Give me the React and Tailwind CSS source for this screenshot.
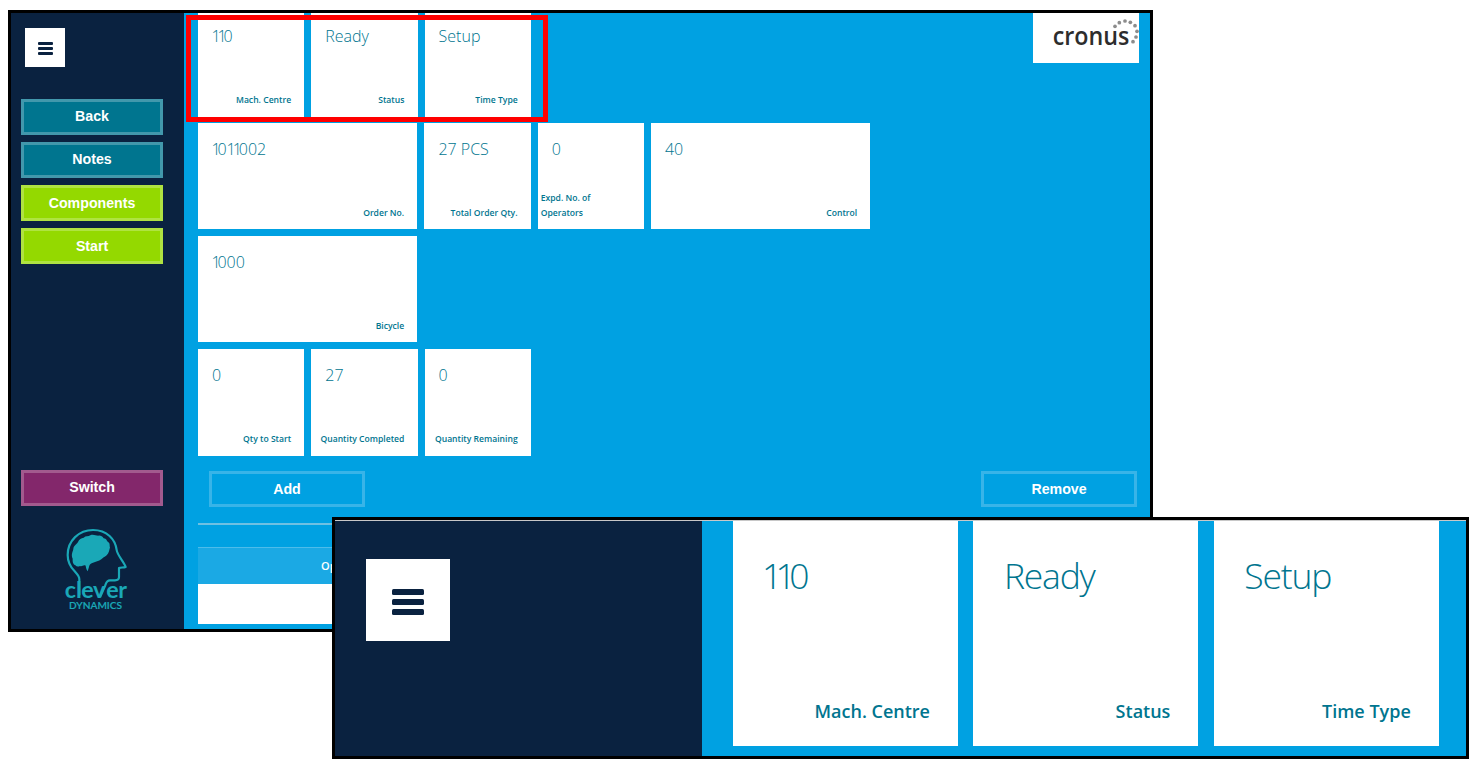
const navButtons = [
  { label: "Back", tone: "bg-[#00758f] border-[#4298ac]" },
  { label: "Notes", tone: "bg-[#00758f] border-[#4298ac]" },
  { label: "Components", tone: "bg-[#94d900] border-[#afe341]" },
  { label: "Start", tone: "bg-[#94d900] border-[#afe341]" },
];

const tileRows = [
  [
    { value: "1011002", label: "Order No.", wide: true },
    { value: "27 PCS", label: "Total Order Qty." },
    { value: "0", label: "Expd. No. of Operators", wrap: true },
    { value: "40", label: "Control", wide: true },
  ],
  [{ value: "1000", label: "Bicycle", wide: true }],
  [
    { value: "0", label: "Qty to Start" },
    { value: "27", label: "Quantity Completed" },
    { value: "0", label: "Quantity Remaining" },
  ],
];

const summary = [
  { value: "110", label: "Mach. Centre" },
  { value: "Ready", label: "Status" },
  { value: "Setup", label: "Time Type" },
];

// Sets the digit 1 on a narrower advance than the other figures.
function Figures({ value }) {
  return value.split(/(1+)/).map((part, i) =>
    part.startsWith("1") ? (
      <span key={i} className={i === 1 ? "-ml-[0.04em] tracking-[-0.19em]" : "tracking-[-0.19em]"}>
        {part}
      </span>
    ) : (
      part
    )
  );
}

function Tile({ value, label, wide, wrap, first }) {
  return (
    <div
      className={`flex shrink-0 flex-col justify-between bg-white pb-[9px] text-[#00758f] ${
        wide ? "w-[219.4px]" : "w-[106.3px]"
      } ${first ? "h-[103.5px] pt-[12px]" : "h-[106.3px] pt-[15px]"}`}
    >
      <div className="pl-[14px] text-[16px] leading-[22px] font-light">
        <Figures value={value} />
      </div>
      <div
        className={`text-[8.6px] leading-[14.6px] font-semibold ${
          wrap ? "w-[72px] pl-[3px] text-left" : "pr-[13.2px] text-right whitespace-nowrap"
        }`}
      >
        {label}
      </div>
    </div>
  );
}

function BigTile({ value, label }) {
  return (
    <div className="flex h-[225px] w-[225px] shrink-0 flex-col justify-between bg-white pt-[30px] pb-[22px] text-[#00758f]">
      <div className="pl-[30.5px] text-[35.5px] leading-[49px] font-light tracking-[-1.2px]">
        <Figures value={value} />
      </div>
      <div className="pr-[28px] text-right text-[18px] leading-[26px] font-semibold">{label}</div>
    </div>
  );
}

function Button({ label, className }) {
  return (
    <button
      className={`flex h-[36px] items-center justify-center border-[3px] pt-[0.8px] font-['Liberation_Sans',Arial,sans-serif] text-[14.2px] font-bold text-white ${className}`}
    >
      {label}
    </button>
  );
}

function CleverLogo() {
  return (
    <svg className="h-[84px] w-[70px]" viewBox="65 35 210 252" fill="none">
      <path
        d="M117 240V192C117 182 111 177 103 168C88 153 82 140 82 119C82 76 116 44 158 44C200 44 225 72 229 104C230 118 254 145 256 155C249 158 241 155 236 158V186C236 194 231 195 224 195H209C198 195 198 202 194 212L179 246"
        stroke="#1aa8b7"
        strokeWidth="6.5"
        strokeLinejoin="round"
      />
      <path
        d="M105 150C96 145 97 136 97 130C91 118 98 108 99 101C100 91 108 88 113 80C116 71 123 68 130 67C136 61 144 64 150 60C158 56 166 61 174 61C180 60 186 62 190 69C199 70 199 77 203 80C210 83 207 91 209 96C207 104 206 114 199 120C192 126 188 127 183 132C175 138 166 139 158 142C149 144 147 149 146 155L142 168C139 164 137 158 136 151C129 147 125 156 119 152C113 155 109 154 105 150Z"
        fill="#1aa8b7"
      />
      <text
        x="73 107 123 158 198 234"
        y="248"
        fontFamily="Lato, sans-serif"
        fontWeight="700"
        fontSize="70"
        fill="#1aa8b7"
      >
        clever
      </text>
      <text
        x="86"
        y="280"
        fontFamily="Lato, sans-serif"
        fontWeight="600"
        fontSize="28"
        textLength="159"
        lengthAdjust="spacingAndGlyphs"
        fill="#1aa8b7"
        stroke="#1aa8b7"
        strokeWidth="0.5"
      >
        DYNAMICS
      </text>
    </svg>
  );
}

const cronusDots = [
  [345, 79],
  [358, 68],
  [375, 63],
  [391, 67],
  [405, 77],
  [411, 94],
  [408, 111],
  [399, 125],
];

function CronusLogo() {
  return (
    <svg className="h-[50px] w-[106px] bg-white" viewBox="99 39 318 150">
      <text
        x="158"
        y="136"
        fontFamily="'Open Sans', sans-serif"
        fontWeight="600"
        fontSize="78"
        textLength="230"
        lengthAdjust="spacingAndGlyphs"
        fill="#2d2d2d"
      >
        cronus
      </text>
      {cronusDots.map(([x, y]) => (
        <circle key={x} cx={x} cy={y} r="5.6" fill="#8c8c8c" />
      ))}
    </svg>
  );
}

function MainWindow() {
  return (
    <div className="absolute top-[10px] left-[8px] flex h-[622px] w-[1145px] overflow-hidden border-[3px] border-black bg-[#00a1e2]">
      <aside className="flex w-[172.5px] shrink-0 flex-col items-start bg-[#0a2240] pl-[10.3px]">
        <button className="mt-[15px] ml-[4px] flex h-[39px] w-[39.5px] flex-col items-center justify-center gap-[2.4px] bg-white pt-[2px]">
          <span className="h-[2.6px] w-[15px] rounded-[1px] bg-[#0a2240]" />
          <span className="h-[2.6px] w-[15px] rounded-[1px] bg-[#0a2240]" />
          <span className="h-[2.6px] w-[15px] rounded-[1px] bg-[#0a2240]" />
        </button>
        <nav className="mt-[31.5px] flex flex-col gap-[7.2px]">
          {navButtons.map((b) => (
            <Button key={b.label} label={b.label} className={`w-[141.5px] ${b.tone}`} />
          ))}
        </nav>
        <Button label="Switch" className="mt-[205.5px] w-[141.5px] border-[#a25a8e] bg-[#83276b]" />
        <div className="mt-[21px] ml-[40.4px]">
          <CleverLogo />
        </div>
      </aside>
      <main className="flex min-w-0 grow flex-col pl-[14.5px]">
        <div className="flex items-start justify-between pr-[11px]">
          <div className="flex gap-[7px]">
            {summary.map((t) => (
              <Tile key={t.label} {...t} first />
            ))}
          </div>
          <CronusLogo />
        </div>
        <div className="mt-[6.6px] flex flex-col gap-[6.8px]">
          {tileRows.map((row, i) => (
            <div key={i} className="flex gap-[7px]">
              {row.map((t) => (
                <Tile key={t.label} {...t} />
              ))}
            </div>
          ))}
        </div>
        <div className="mt-[15.4px] flex justify-between pr-[13px] pl-[11px]">
          <Button label="Add" className="w-[156px] border-[#38b4e8]" />
          <Button label="Remove" className="w-[156px] border-[#38b4e8]" />
        </div>
        <div className="mt-[16px] h-[2px] w-[939px] bg-[#6ec0e2]" />
        <div className="mt-[22px] w-[939px]">
          <div className="flex h-[37px] items-center border-t border-[#4dbcea] bg-[#1ba9e4] pt-px pl-[123px] text-[11px] font-semibold text-white">
            Operation
          </div>
          <div className="h-[40.5px] bg-white" />
        </div>
      </main>
    </div>
  );
}

function DetailWindow() {
  return (
    <div className="absolute top-[517px] left-[332px] flex h-[242px] w-[1137px] flex-col border-[3px] border-black bg-[#00a1e2]">
      <div className="h-px shrink-0 bg-[#c8c8c8]" />
      <div className="flex grow">
        <div className="w-[367px] shrink-0 bg-[#0a2240] pt-[38px] pl-[31px]">
          <button className="flex h-[82px] w-[84px] flex-col items-center gap-[4.4px] bg-white pt-[30px]">
            <span className="h-[5.6px] w-[31.5px] rounded-[1.5px] bg-[#0a2240]" />
            <span className="h-[5.6px] w-[31.5px] rounded-[1.5px] bg-[#0a2240]" />
            <span className="h-[5.6px] w-[31.5px] rounded-[1.5px] bg-[#0a2240]" />
          </button>
        </div>
        <div className="flex gap-[15.4px] pl-[31px]">
          {summary.map((t) => (
            <BigTile key={t.label} {...t} />
          ))}
        </div>
      </div>
    </div>
  );
}

export default function App() {
  return (
    <div className="relative h-[772px] w-[1478px] overflow-hidden bg-white font-['Open_Sans','Noto_Sans',sans-serif]">
      <MainWindow />
      <div className="absolute top-[15px] left-[186px] h-[107px] w-[362px] border-[5px] border-[#ff0000]" />
      <DetailWindow />
    </div>
  );
}
